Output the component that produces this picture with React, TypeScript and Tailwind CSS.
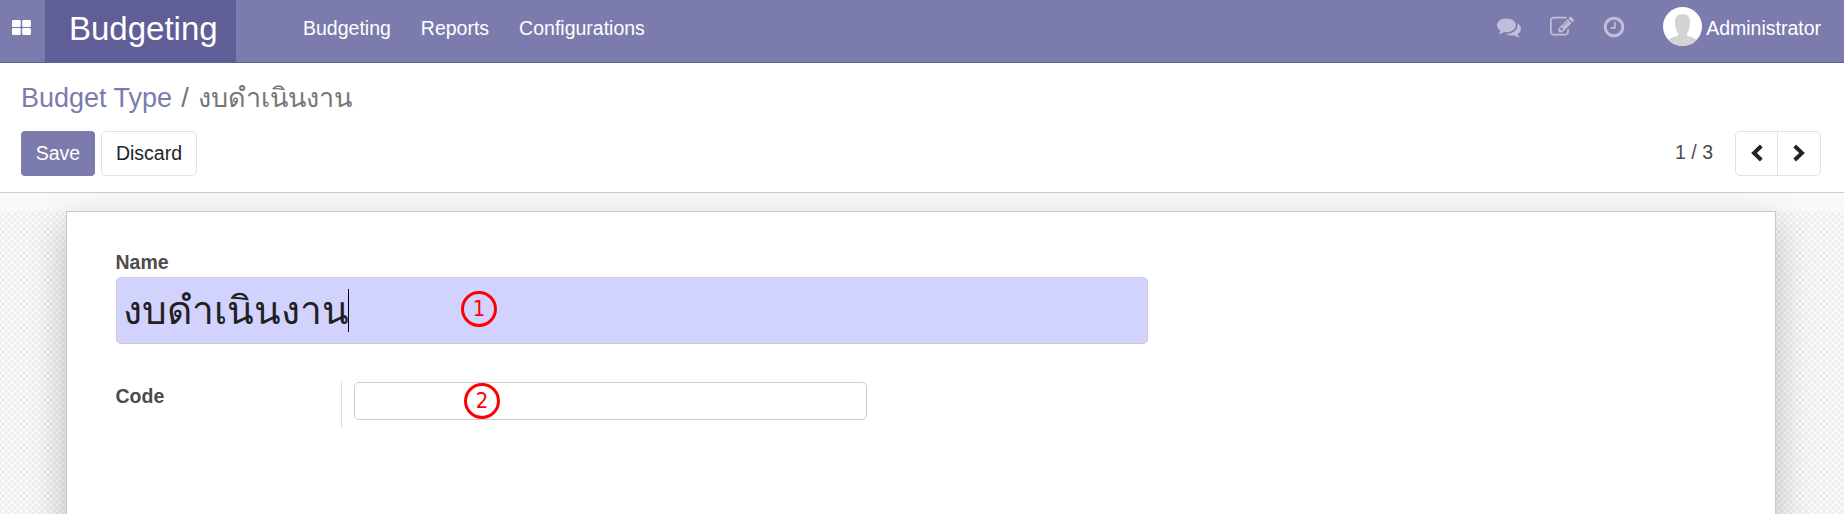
function Marker({ n, pos }: { n: number; pos: string }) {
  return (
    <span
      className={`absolute ${pos} flex h-9 w-9 items-center justify-center rounded-full border-[3px] border-[#f00] font-['DejaVu_Sans',sans-serif] text-[22px] leading-none text-[#f00]`}
    >
      <span className="scale-x-90">{n}</span>
    </span>
  );
}

function ThLarge() {
  return (
    <svg viewBox="0 0 19 15" className="h-[15px] w-[19px]" fill="#fff">
      <rect x="0" y="0" width="8.7" height="7" rx="1.3" />
      <rect x="10.2" y="0" width="8.7" height="7" rx="1.3" />
      <rect x="0" y="8" width="8.7" height="7" rx="1.3" />
      <rect x="10.2" y="8" width="8.7" height="7" rx="1.3" />
    </svg>
  );
}

function Comments() {
  return (
    <svg viewBox="0 0 1792 1792" className="h-6 w-6 fill-[#c0bfd9]">
      <path d="M1408 768q0 139-94 257t-256.500 186.500-353.500 68.500q-86 0-176-16-124 88-278 128-36 9-86 16h-3q-11 0-20.500-8t-11.500-21q-1-3-1-6.500t.5-6.500 2-6l2.500-5 3.500-5.500 4-5 4.500-5 4-4.500q5-6 23-25t26-29.500 22.500-29 25-38.500 20.500-44q-124-72-195-177t-71-224q0-139 94-257t256.500-186.500 353.500-68.500 353.500 68.500 256.500 186.500 94 257zm384 256q0 120-71 224.500t-195 176.500q10 24 20.500 44t25 38.500 22.500 29 26 29.500 23 25q1 1 4 4.500t4.500 5 4 5 3.500 5.500l2.500 5 2 6 .5 6.500-1 6.500q-3 14-13 22t-22 7q-50-7-86-16-154-40-278-128-90 16-176 16-271 0-472-132 58 4 88 4 161 0 309-45t264-129q125-92 192-212t67-254q0-77-23-152 129 71 204 178t75 230z" />
    </svg>
  );
}

function Edit() {
  return (
    <svg viewBox="0 0 1792 1792" className="h-6 w-6 fill-[#c0bfd9]">
      <path d="M888 1184l116-116-152-152-116 116v56h96v96h56zm440-720q-16-16-33 1l-350 350q-17 17-1 33t33-1l350-350q17-17 1-33zm80 594v190q0 119-84.500 203.500t-203.500 84.500h-832q-119 0-203.500-84.500t-84.500-203.500v-832q0-119 84.500-203.500t203.500-84.500h832q63 0 117 25 15 7 18 23 3 17-9 29l-49 49q-14 14-32 8-23-6-45-6h-832q-66 0-113 47t-47 113v832q0 66 47 113t113 47h832q66 0 113-47t47-113v-126q0-13 9-22l64-64q15-15 35-7t20 29zm-96-738l288 288-672 672h-288v-288zm444 132l-92 92-288-288 92-92q28-28 68-28t68 28l152 152q28 28 28 68t-28 68z" />
    </svg>
  );
}

function Clock() {
  return (
    <svg viewBox="0 0 1792 1792" className="h-6 w-6 fill-[#c0bfd9]">
      <path d="M1024 544v448q0 14-9 23t-23 9h-320q-14 0-23-9t-9-23v-64q0-14 9-23t23-9h224v-352q0-14 9-23t23-9h64q14 0 23 9t9 23zm416 352q0-148-73-273t-198-198-273-73-273 73-198 198-73 273 73 273 198 198 273 73 273-73 198-198 73-273zm224 0q0 209-103 385.500t-279.500 279.500-385.500 103-385.500-103-279.500-279.500-103-385.500 103-385.500 279.500-279.500 385.500-103 385.500 103 279.500 279.500 103 385.500z" />
    </svg>
  );
}

function Avatar() {
  return (
    <svg viewBox="0 0 39 39" className="h-[39px] w-[39px] rounded-full bg-white">
      <path
        fill="#d4d4d4"
        d="M19.500 7.300C24.500 7.300 27 9.500 27 15.500C27 20.500 26 23.500 24 26.500C23.600 28.300 24.500 29 26.500 29.400C29.500 30 32.500 31.500 34.500 33.500L30 39H9L4.500 33.500C6.500 31.500 9.500 30 12.500 29.400C14.500 29 15.400 28.300 15 26.500C13 23.500 12 20.500 12 15.500C12 9.500 14.500 7.300 19.500 7.300Z"
      />
    </svg>
  );
}

function Chevron({ flip }: { flip?: boolean }) {
  return (
    <svg viewBox="0 0 12 18" className={flip ? "h-[18px] w-3 -scale-x-100" : "h-[18px] w-3"}>
      <path d="M10.300 2L3 9l7.300 7" fill="none" stroke="#212529" strokeWidth="3.900" />
    </svg>
  );
}

export default function App() {
  return (
    <div className="flex h-[514px] w-[1844px] flex-col overflow-hidden bg-white font-['Liberation_Sans'] text-[19.5px] text-[#4c4c4c]">
      <nav className="flex h-[63px] shrink-0 border-b border-[#5f5e97] bg-[#7c7bad] text-white">
        <div className="flex w-[45px] pl-3 pt-5">
          <ThLarge />
        </div>
        <div className="w-[191px] bg-[#5f5e97] pl-6 text-[33px] leading-[57px]">Budgeting</div>
        <div className="flex grow gap-[30px] pl-[67px] leading-[56px]">
          <span>Budgeting</span>
          <span>Reports</span>
          <span>Configurations</span>
        </div>
        <div className="flex pr-[23px]">
          <div className="flex pr-[37px] pt-[15px]">
            <Comments />
            <div className="pl-[29px] pr-7">
              <Edit />
            </div>
            <Clock />
          </div>
          <div className="flex gap-1">
            <div className="pt-[7px]">
              <Avatar />
            </div>
            <span className="leading-[56px]">Administrator</span>
          </div>
        </div>
      </nav>

      <header className="flex h-[130px] shrink-0 flex-col border-b border-[#ccc] px-[21px] pt-[15px]">
        <div className="flex h-[41px] items-center whitespace-pre text-[27px] leading-[41px]">
          <span className="text-[#7c7bad]">Budget Type</span>
          <span className="w-[26px] text-center text-[#6c757d]">/</span>
          <span className="text-[#777]">งบดำเนินงาน</span>
        </div>
        <div className="mt-3 flex h-[45px] items-center">
          <button className="h-[45px] w-[74px] rounded-[4px] bg-[#7c7bad] text-white">Save</button>
          <button className="ml-1.5 h-[45px] w-24 rounded-[5px] border border-[#dee2e6] text-[#212529]">Discard</button>
          <span className="ml-auto mr-[22px] pb-0.5">1 / 3</span>
          <div className="mr-0.5 flex h-[45px] w-[86px] rounded-[5px] border border-[#dee2e6]">
            <div className="flex w-[42px] items-center justify-center border-r border-[#dee2e6] pb-0.5">
              <Chevron />
            </div>
            <div className="flex grow items-center justify-center pb-0.5">
              <Chevron flip />
            </div>
          </div>
        </div>
      </header>

      <main className="flex grow flex-col overflow-hidden bg-[#f9f9f9] pt-[18px]">
        <div className="flex grow bg-[#fdfdfd] bg-[image:radial-gradient(circle_at_center,#ececec_0,#ececec_1px,transparent_2.4px),radial-gradient(circle_at_center,#ececec_0,#ececec_1px,transparent_2.4px)] bg-[length:6px_6px] bg-[position:0_0,3px_3px] pl-[66px] pr-[68px]">
          <section className="-mb-20 grow border border-[#c8c8d3] bg-white px-[49px] pt-[37px] shadow-[0_14px_36px_rgba(0,0,0,0.23)]">
            <div className="h-7 font-bold leading-[27px] -ml-[0.5px]">Name</div>
            <div className="relative flex h-[67px] w-[1032px] items-center rounded-[5px] border border-[#ccc] bg-[#d2d2ff] pl-1.5 text-[39px] leading-none text-[#212121]">
              <span>งบดำเนินงาน</span>
              <span className="-ml-px h-[43px] w-px bg-black" />
              <Marker n={1} pos="left-[344px] top-[13px]" />
            </div>
            <div className="mt-[38px] flex h-[46px]">
              <div className="w-[226px] border-r border-[#ddd] font-bold leading-[28px]">
                <span className="-ml-[0.5px]">Code</span>
              </div>
              <div className="relative ml-3 h-[38px] w-[513px] rounded-[5px] border border-[#ccc]">
                <Marker n={2} pos="left-[109px] top-0" />
              </div>
            </div>
          </section>
        </div>
      </main>
    </div>
  );
}
